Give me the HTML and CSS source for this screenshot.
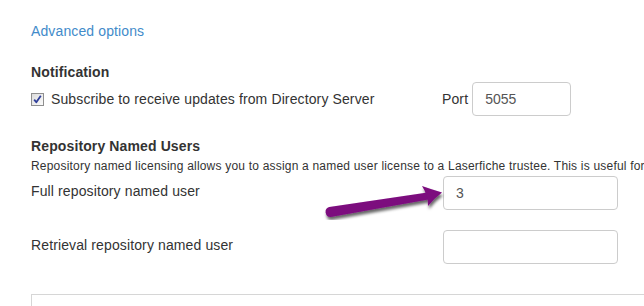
FILE: index.html
```html
<!DOCTYPE html>
<html lang="en">
<head>
    <meta charset="UTF-8">
    <title>Advanced options</title>
    <link rel="stylesheet" href="styles.css">
</head>
<body>
    <div class="page">
        <a class="link" href="#">Advanced options</a>

        <!-- NOTIFICATION -->
        <section class="group">
            <h4>Notification</h4>
            <div class="row">
                <label class="check">
                    <span class="box">
                        <svg width="11" height="11" viewBox="0 0 11 11"><path d="M2.2 5.6 L4.3 8.3 L8.8 1.8" fill="none" stroke="#2f3f9a" stroke-width="1.8" stroke-linejoin="round"/></svg>
                    </span>
                    Subscribe to receive updates from Directory Server
                </label>
                <div class="field">
                    <span>Port</span>
                    <input class="input port" type="text" value="5055">
                </div>
            </div>
        </section>

        <!-- REPOSITORY NAMED USERS -->
        <section class="group users">
            <h4>Repository Named Users</h4>
            <p class="hint">Repository named licensing allows you to assign a named user license to a Laserfiche trustee. This is useful for</p>
            <div class="row">
                <span class="label">Full repository named user</span>
                <input class="input wide" type="text" value="3">
            </div>
            <div class="row next">
                <span class="label">Retrieval repository named user</span>
                <input class="input wide" type="text" value="">
            </div>
        </section>

        <div class="panel"></div>

        <svg class="arrow" width="132" height="40" viewBox="318 180 132 40">
            <defs>
                <filter id="shadow" x="-20%" y="-50%" width="140%" height="200%">
                    <feDropShadow dx="1" dy="3" stdDeviation="1.5" flood-color="#000" flood-opacity="0.6"/>
                </filter>
            </defs>
            <g fill="#7b0a7e" filter="url(#shadow)">
                <path d="M329.2 207.1 L427.4 192.5 L428.6 199.5 L330.8 216.9 A5 5 0 0 1 329.2 207.1 Z"/>
                <path d="M422 186 Q432 189.5 442 192.5 Q434 198.5 428 206 Q428.5 196 422 186 Z"/>
            </g>
        </svg>
    </div>
</body>
</html>
```

FILE: styles.css
```css
html, body {
    margin: 0;
    overflow: hidden;
}
body {
    font-family: "Liberation Sans", Arial, sans-serif;
    font-size: 14px;
    line-height: 20px;
    letter-spacing: 0.12px;
    color: #333;
    background: #fff;
}
.page {
    position: relative;
    padding: 21px 0 0 31px;
    height: 306px;
    box-sizing: border-box;
    overflow: hidden;
}
.link {
    display: block;
    color: #428bca;
    text-decoration: none;
}
.group {
    margin-top: 21px;
}
.users {
    margin-top: 20px;
}
h4 {
    margin: 0;
    font-size: 14px;
    line-height: 20px;
    font-weight: bold;
}
.row {
    display: grid;
    grid-template-columns: 412px auto;
    align-items: center;
}
.row.next {
    margin-top: 20px;
}
.label {
    padding-bottom: 4px;
}
.check {
    display: flex;
    align-items: center;
}
.box {
    width: 11px;
    height: 11px;
    border: 1px solid #8f8f8f;
    background: linear-gradient(135deg, #dcdcdc, #fbfbfb);
    margin-right: 7px;
    display: flex;
}
.field {
    display: flex;
    align-items: center;
    gap: 4px;
    margin-left: -1px;
}
.input {
    box-sizing: border-box;
    height: 34px;
    padding: 6px 12px;
    border: 1px solid #ccc;
    border-radius: 4px;
    font-family: inherit;
    font-size: 14px;
    color: #555;
    background: #fff;
}
.port {
    width: 99px;
}
.wide {
    width: 175px;
}
.hint {
    margin: 2px 0 1px;
    font-size: 12px;
    line-height: 17px;
    letter-spacing: 0.2px;
    white-space: nowrap;
}
.panel {
    margin-top: 30px;
    height: 40px;
    border: 1px solid #d6d6d6;
    border-right: none;
}
.arrow {
    position: absolute;
    left: 318px;
    top: 180px;
}
```
